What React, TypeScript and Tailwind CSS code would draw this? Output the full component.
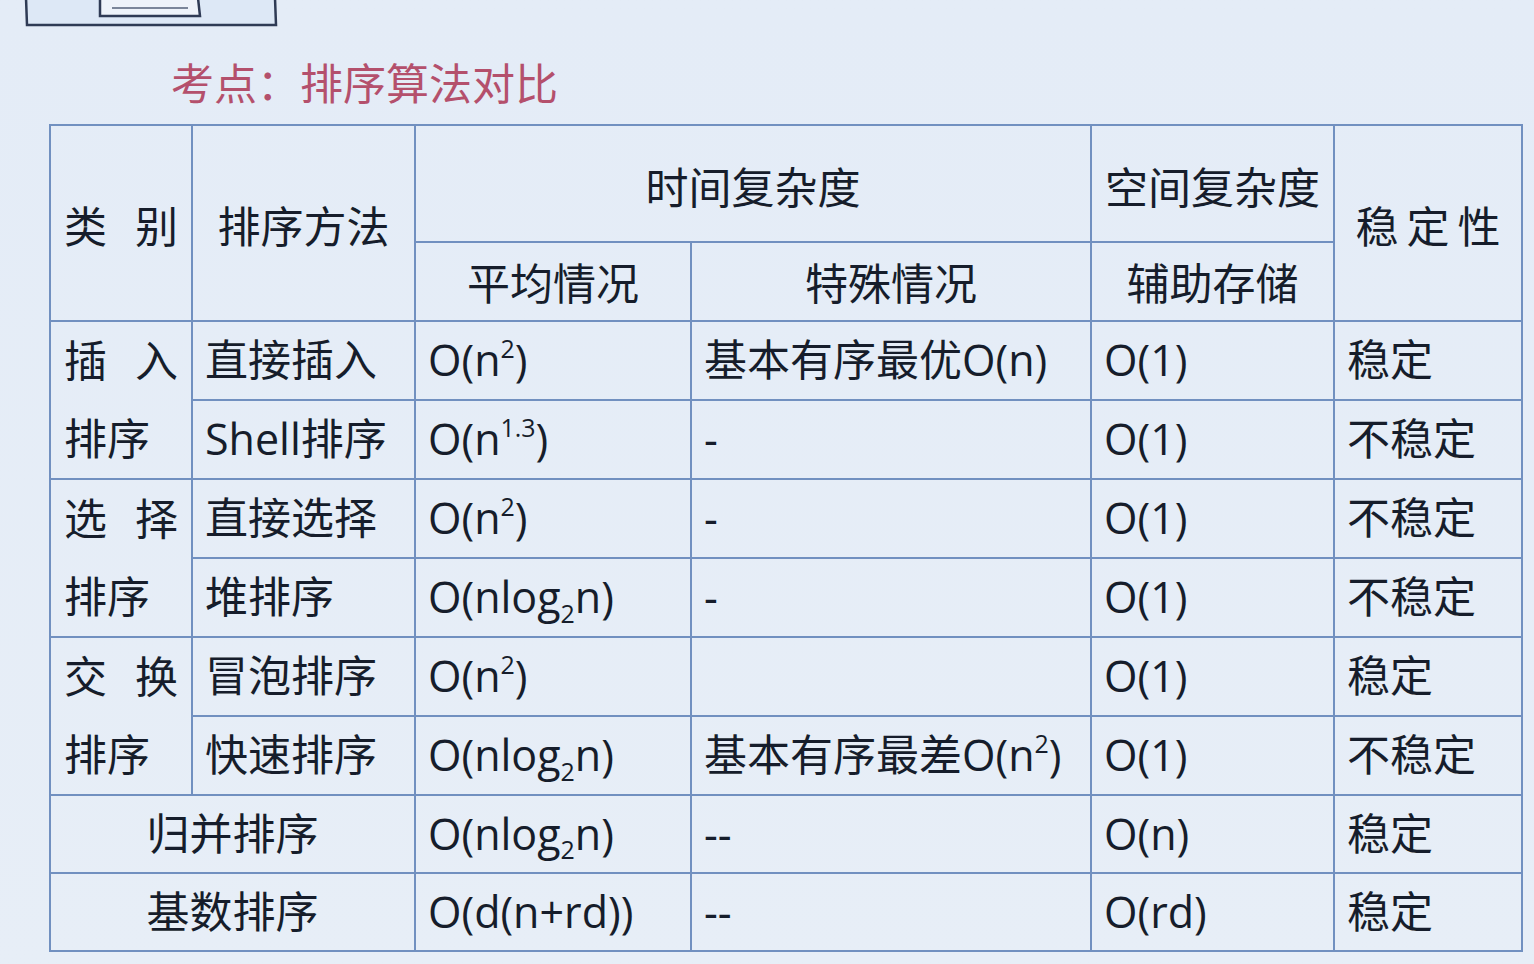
import React from 'react';

const font = { fontFamily: '"Open Sans", "Noto Sans CJK SC", sans-serif' };

const cell = 'border-2 border-[#7190c0] p-0 align-middle';

function Sup({ children }: { children: React.ReactNode }) {
  return <sup className="text-[0.58em] relative -top-[0.72em] leading-none align-baseline">{children}</sup>;
}

function Sub({ children }: { children: React.ReactNode }) {
  return <sub className="text-[0.58em] relative top-[0.38em] leading-none align-baseline">{children}</sub>;
}

const nlogn = (
  <>
    O(nlog<Sub>2</Sub>n)
  </>
);

// 类别 merged cell: first line spread out, second line left
function Category({ a, b }: { a: string; b: string }) {
  return (
    <div className="flex flex-col px-[13px]">
      <div className="h-[78px] flex items-center justify-between">
        <span>{a}</span>
        <span>{b}</span>
      </div>
      <div className="h-[78px] flex items-center">排序</div>
    </div>
  );
}

type Row = {
  method: React.ReactNode;
  avg: React.ReactNode;
  special: React.ReactNode;
  space: React.ReactNode;
  stable: string;
};

const rows: Row[] = [
  { method: '直接插入', avg: <>O(n<Sup>2</Sup>)</>, special: '基本有序最优O(n)', space: 'O(1)', stable: '稳定' },
  { method: 'Shell排序', avg: <>O(n<Sup>1.3</Sup>)</>, special: '-', space: 'O(1)', stable: '不稳定' },
  { method: '直接选择', avg: <>O(n<Sup>2</Sup>)</>, special: '-', space: 'O(1)', stable: '不稳定' },
  { method: '堆排序', avg: nlogn, special: '-', space: 'O(1)', stable: '不稳定' },
  { method: '冒泡排序', avg: <>O(n<Sup>2</Sup>)</>, special: '', space: 'O(1)', stable: '稳定' },
  { method: '快速排序', avg: nlogn, special: <>基本有序最差O(n<Sup>2</Sup>)</>, space: 'O(1)', stable: '不稳定' },
];

const categories: [string, string][] = [
  ['插', '入'],
  ['选', '择'],
  ['交', '换'],
];

export default function App() {
  return (
    <main
      className="w-[1534px] h-[964px] overflow-hidden bg-gradient-to-b from-[#e4ecf7] to-[#e7eef7] text-[#161d2b] text-[43px]"
      style={font}
    >
      {/* 左上角的插图（被截断） */}
      <svg width="260" height="28" viewBox="0 0 260 28" className="block ml-[24px]">
        <path d="M2 -2 L3 25 L252 25 L251 -2" fill="#dde8f6" stroke="#2f3b55" strokeWidth="2.5" />
        <path d="M76 -2 L76 16 L176 16 L174 -2" fill="#eef3fa" stroke="#2f3b55" strokeWidth="2.5" />
        <line x1="88" y1="8" x2="164" y2="8" stroke="#55627a" strokeWidth="1.5" />
      </svg>

      <h1 className="ml-[171px] mt-[34px] h-[62px] text-[43px] leading-none font-normal text-[#b4506c]">
        考点：排序算法对比
      </h1>

      <table className="ml-[49px] border-collapse table-fixed w-[1472px]">
        <colgroup>
          <col className="w-[142px]" />
          <col className="w-[223px]" />
          <col className="w-[276px]" />
          <col className="w-[400px]" />
          <col className="w-[243px]" />
          <col className="w-[188px]" />
        </colgroup>
        <tbody>
          <tr className="h-[117px]">
            <td rowSpan={2} className={cell}>
              <div className="flex justify-between px-[13px] pt-[8px]">
                <span>类</span>
                <span>别</span>
              </div>
            </td>
            <td rowSpan={2} className={cell + ' text-center'}>
              <div className="pt-[8px]">排序方法</div>
            </td>
            <td colSpan={2} className={cell + ' text-center'}>
              <div className="pt-[10px]">时间复杂度</div>
            </td>
            <td className={cell + ' text-center'}>
              <div className="pt-[10px]">空间复杂度</div>
            </td>
            <td rowSpan={2} className={cell}>
              <div className="flex justify-center gap-[8px] pt-[8px]">
                <span>稳</span>
                <span>定</span>
                <span>性</span>
              </div>
            </td>
          </tr>
          <tr className="h-[79px]">
            <td className={cell + ' text-center'}>
              <div className="pt-[6px]">平均情况</div>
            </td>
            <td className={cell + ' text-center'}>
              <div className="pt-[6px]">特殊情况</div>
            </td>
            <td className={cell + ' text-center'}>
              <div className="pt-[6px]">辅助存储</div>
            </td>
          </tr>

          {rows.map((r, i) => (
            <tr key={i} className="h-[78px]">
              {i % 2 === 0 && (
                <td rowSpan={2} className={cell}>
                  <Category a={categories[i / 2][0]} b={categories[i / 2][1]} />
                </td>
              )}
              <td className={cell + ' pl-[12px] whitespace-nowrap'}>{r.method}</td>
              <td className={cell + ' pl-[12px] whitespace-nowrap'}>{r.avg}</td>
              <td className={cell + ' pl-[12px] whitespace-nowrap'}>{r.special}</td>
              <td className={cell + ' pl-[12px] whitespace-nowrap'}>{r.space}</td>
              <td className={cell + ' pl-[12px] whitespace-nowrap'}>{r.stable}</td>
            </tr>
          ))}

          <tr className="h-[78px]">
            <td colSpan={2} className={cell + ' text-center'}>归并排序</td>
            <td className={cell + ' pl-[12px] whitespace-nowrap'}>{nlogn}</td>
            <td className={cell + ' pl-[12px]'}>--</td>
            <td className={cell + ' pl-[12px]'}>O(n)</td>
            <td className={cell + ' pl-[12px]'}>稳定</td>
          </tr>
          <tr className="h-[78px]">
            <td colSpan={2} className={cell + ' text-center'}>基数排序</td>
            <td className={cell + ' pl-[12px] whitespace-nowrap'}>O(d(n+rd))</td>
            <td className={cell + ' pl-[12px]'}>--</td>
            <td className={cell + ' pl-[12px]'}>O(rd)</td>
            <td className={cell + ' pl-[12px]'}>稳定</td>
          </tr>
        </tbody>
      </table>
    </main>
  );
}
